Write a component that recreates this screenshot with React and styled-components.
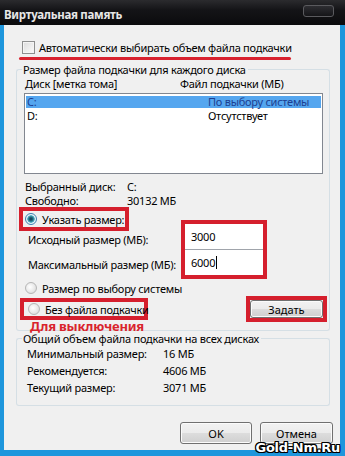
import React from "react";
import styled, { createGlobalStyle } from "styled-components";

const Global = createGlobalStyle`
  html, body { margin: 0; padding: 0; }
  body { width: 345px; height: 456px; overflow: hidden; font-family: "Noto Sans", "Open Sans", sans-serif; font-size: 11px; letter-spacing: -0.25px; color: #000; white-space: nowrap; }
`;

const Window = styled.div`
  position: relative;
  width: 345px;
  height: 456px;
  background: #1e96dc;
  display: flex;
  flex-direction: column;
  box-sizing: border-box;
`;

const TitleBar = styled.div`
  height: 25px;
  flex: none;
  background: linear-gradient(#2b2b2e 0%, #141417 40%, #0b0b0d 100%);
  display: flex;
  align-items: center;
  padding: 0 0 0 4px;
  box-sizing: border-box;
`;

const Title = styled.div`
  color: #e6e6e6;
  font-weight: bold;
  font-size: 11.5px;
  letter-spacing: -0.3px;
  flex: 1;
  margin-top: 4px;
`;

const CloseBtn = styled.div`
  width: 31px;
  height: 12px;
  margin: 0 11px 4px 0;
  border: 1px solid #5a5a5e;
  border-radius: 3px;
  background: linear-gradient(#2e2e32, #151518);
  box-sizing: border-box;
`;

const Body = styled.div`
  flex: 1;
  margin: 0 5px 6px 4px;
  background: #f0f0f0;
  padding: 0 10px 0 12px;
  display: flex;
  flex-direction: column;
`;

const CheckRow = styled.label`
  display: flex;
  align-items: center;
  height: 13px;
  margin: 16px 0 0 6px;
  gap: 4px;
`;

const CheckBox = styled.span`
  width: 13px;
  height: 13px;
  box-sizing: border-box;
  border: 1px solid #8e8f8f;
  background: linear-gradient(135deg, #dcdcdc, #fbfbfb);
  box-shadow: inset 0 0 0 1px #f4f4f4;
  flex: none;
`;

const Underline = styled.div`
  height: 3px;
  width: 272px;
  margin: 3px 0 0 3px;
  background: #d8222f;
  border-radius: 2px;
`;

const GroupHeader = styled.div`
  display: flex;
  align-items: center;
  height: 14px;
  margin-top: ${(p) => p.$mt || 0}px;
  &::before, &::after {
    content: "";
    align-self: flex-end;
    height: 6px;
    border-top: 1px solid #d5dfe5;
  }
  &::before {
    width: 5px;
    border-left: 1px solid #d5dfe5;
    border-top-left-radius: 3px;
    margin-right: 1px;
  }
  &::after {
    flex: 1;
    border-right: 1px solid #d5dfe5;
    border-top-right-radius: 3px;
    margin-left: 2px;
  }
`;

const GroupBody = styled.div`
  position: relative;
  border: 1px solid #d5dfe5;
  border-top: none;
  border-radius: 0 0 3px 3px;
  height: ${(p) => p.$h}px;
  box-sizing: border-box;
  display: flex;
  flex-direction: column;
`;

const ColHeader = styled.div`
  display: flex;
  height: 14px;
  align-items: center;
  padding-left: 8px;
`;

const Col = styled.span`
  width: ${(p) => p.$w}px;
  flex: none;
`;

const ListBox = styled.div`
  margin: 3px 0 0 7px;
  width: 299px;
  height: 81px;
  background: #fff;
  border: 1px solid #828790;
  box-sizing: border-box;
  padding: 2px 1px;
`;

const ListRow = styled.div`
  display: flex;
  height: ${(p) => (p.$sel ? 12 : 13)}px;
  line-height: 12px;
  align-items: center;
  padding-left: 1px;
  margin-bottom: ${(p) => (p.$sel ? 1 : 0)}px;
  background: ${(p) => (p.$sel ? "#55a6ef" : "transparent")};
  color: ${(p) => (p.$sel ? "#1d3f91" : "#000")};
`;

const InfoRow = styled.div`
  display: flex;
  height: 14px;
  align-items: center;
  padding-left: 8px;
  margin-top: ${(p) => p.$mt || 0}px;
`;

const SizeSection = styled.div`
  display: flex;
`;

const LeftCol = styled.div`
  display: flex;
  flex-direction: column;
  width: 164px;
`;

const RedFrame = styled.div`
  border: 4px solid #d51f2d;
  box-sizing: border-box;
  display: flex;
  align-items: ${(p) => (p.$col ? "stretch" : "center")};
  justify-content: ${(p) => (p.$center ? "center" : "flex-start")};
  flex-direction: ${(p) => (p.$col ? "column" : "row")};
  width: ${(p) => p.$w}px;
  height: ${(p) => p.$h}px;
  margin-left: ${(p) => p.$ml || 0}px;
  margin-top: ${(p) => p.$mt || 0}px;
  background: ${(p) => (p.$col ? "#fff" : "transparent")};
`;

const RadioRow = styled.label`
  display: flex;
  align-items: center;
  gap: 5px;
  height: ${(p) => p.$h || 14}px;
  padding-left: ${(p) => p.$pl || 0}px;
  margin-top: ${(p) => p.$mt || 0}px;
`;

const Radio = styled.span`
  width: 12px;
  height: 12px;
  border-radius: 50%;
  box-sizing: border-box;
  flex: none;
  border: 1px solid ${(p) => (p.$on ? "#3c7fb1" : "#b6b6b6")};
  background: ${(p) =>
    p.$on
      ? "radial-gradient(circle at 50% 50%, #0d3350 0, #1f6b7d 2px, #58b5c8 3.5px, #e9f2f6 4px)"
      : "radial-gradient(circle at 40% 40%, #ffffff 0, #e6e6e6 60%, #cfcfcf 100%)"};
`;

const FieldLabel = styled.div`
  height: 14px;
  display: flex;
  align-items: center;
  padding-left: 11px;
  margin-top: ${(p) => p.$mt || 0}px;
`;

const Input = styled.div`
  flex: 1;
  display: flex;
  align-items: center;
  padding-left: 6px;
  background: #fff;
  border-bottom: ${(p) => (p.$first ? "1px solid #a0a4ab" : "none")};
`;

const Caret = styled.span`
  display: inline-block;
  width: 1px;
  height: 13px;
  background: #000;
  margin-left: 1px;
`;

const ActionRow = styled.div`
  display: flex;
  align-items: center;
  justify-content: space-between;
  height: 26px;
  margin-top: 1px;
  padding: 0 2px 0 3px;
`;

const Button = styled.button`
  font: inherit;
  color: #000;
  width: ${(p) => p.$w}px;
  height: ${(p) => p.$h}px;
  border: 1px solid #707070;
  border-radius: 3px;
  background: linear-gradient(#f2f2f2 0%, #ebebeb 49%, #dddddd 50%, #cfcfcf 100%);
  box-shadow: inset 0 0 0 1px #fbfbfb;
  padding: 0;
  flex: none;
`;

const Annotation = styled.div`
  position: absolute;
  left: 13px;
  top: 244px;
  color: #d9242c;
  font-weight: bold;
  font-size: 13px;
  letter-spacing: -0.2px;
  line-height: 13px;
`;

const TotalRow = styled.div`
  display: flex;
  height: 17px;
  align-items: center;
  padding-left: 10px;
`;

const Footer = styled.div`
  display: flex;
  justify-content: flex-end;
  gap: 8px;
  margin: 16px -3px 0 0;
`;

const Watermark = styled.div`
  position: absolute;
  right: 5px;
  bottom: 1px;
  font-family: "DejaVu Sans", sans-serif;
  font-weight: bold;
  font-size: 13px;
  letter-spacing: -0.3px;
  color: #fff;
  text-shadow: -1px -1px 0 #000, 1px -1px 0 #000, -1px 1px 0 #000, 1px 1px 0 #000, 0 1px 0 #000, 1px 0 0 #000, -1px 0 0 #000, 0 -1px 0 #000;
`;

export default function App() {
  return (
    <>
      <Global />
      <Window>
        <TitleBar>
          <Title>Виртуальная память</Title>
          <CloseBtn />
        </TitleBar>
        <Body>
          <CheckRow>
            <CheckBox />
            Автоматически выбирать объем файла подкачки
          </CheckRow>
          <Underline />
          <GroupHeader $mt={2}>Размер файла подкачки для каждого диска</GroupHeader>
          <GroupBody $h={255}>
            <ColHeader>
              <Col $w={155}>Диск [метка тома]</Col>
              <Col $w={130}>Файл подкачки (МБ)</Col>
            </ColHeader>
            <ListBox>
              <ListRow $sel>
                <Col $w={181}>C:</Col>
                <Col $w={110}>По выбору системы</Col>
              </ListRow>
              <ListRow>
                <Col $w={181}>D:</Col>
                <Col $w={110}>Отсутствует</Col>
              </ListRow>
            </ListBox>
            <InfoRow $mt={5}>
              <Col $w={102}>Выбранный диск:</Col>
              <Col $w={80}>C:</Col>
            </InfoRow>
            <InfoRow>
              <Col $w={102}>Свободно:</Col>
              <Col $w={80}>30132 МБ</Col>
            </InfoRow>
            <SizeSection>
              <LeftCol>
                <RedFrame $w={110} $h={24} $ml={2}>
                  <RadioRow $pl={2}>
                    <Radio $on />
                    Указать размер:
                  </RadioRow>
                </RedFrame>
                <FieldLabel $mt={1}>Исходный размер (МБ):</FieldLabel>
                <FieldLabel $mt={11}>Максимальный размер (МБ):</FieldLabel>
              </LeftCol>
              <RedFrame $col $w={86} $h={59} $mt={13}>
                <Input $first>3000</Input>
                <Input>
                  6000
                  <Caret />
                </Input>
              </RedFrame>
            </SizeSection>
            <RadioRow $pl={8} $mt={2}>
              <Radio />
              Размер по выбору системы
            </RadioRow>
            <ActionRow>
              <RedFrame $w={128} $h={22}>
                <RadioRow $pl={4}>
                  <Radio />
                  Без файла подкачки
                </RadioRow>
              </RedFrame>
              <RedFrame $w={81} $h={26} $center>
                <Button $w={73} $h={18}>Задать</Button>
              </RedFrame>
            </ActionRow>
            <Annotation>Для выключения</Annotation>
          </GroupBody>
          <GroupHeader>Общий объем файла подкачки на всех дисках</GroupHeader>
          <GroupBody $h={61}>
            <TotalRow>
              <Col $w={136}>Минимальный размер:</Col>
              <Col $w={80}>16 МБ</Col>
            </TotalRow>
            <TotalRow>
              <Col $w={136}>Рекомендуется:</Col>
              <Col $w={80}>4606 МБ</Col>
            </TotalRow>
            <TotalRow>
              <Col $w={136}>Текущий размер:</Col>
              <Col $w={80}>3071 МБ</Col>
            </TotalRow>
          </GroupBody>
          <Footer>
            <Button $w={72} $h={22}>OK</Button>
            <Button $w={73} $h={22}>Отмена</Button>
          </Footer>
        </Body>
        <Watermark>Gold-Nm.Ru</Watermark>
      </Window>
    </>
  );
}
